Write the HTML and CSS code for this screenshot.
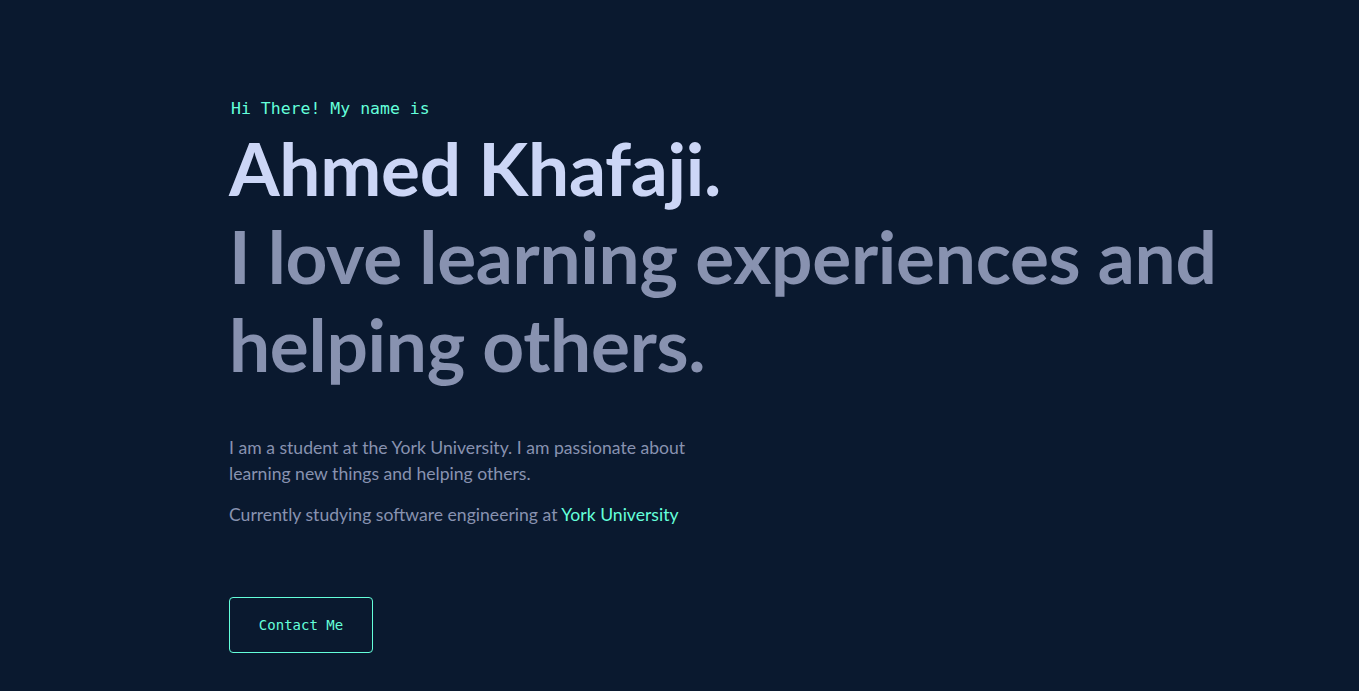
FILE: index.html
```html
<!DOCTYPE html>
<html lang="en">
<head>
<meta charset="utf-8">
<title>Ahmed Khafaji</title>
<link rel="stylesheet" href="styles.css">
</head>
<body>
<main class="main">
  <section class="hero">
    <p class="hello">Hi There! My name is</p>
    <h1 class="name">Ahmed Khafaji.</h1>
    <h2 class="tagline">I love learning experiences and helping others.</h2>
    <div class="about">
      <p>I am a student at the York University. I am passionate about learning new things and helping others.</p>
      <p>Currently studying software engineering at <a class="link" href="#">York University</a></p>
    </div>
    <a class="button" href="#">Contact Me</a>
  </section>
</main>
</body>
</html>
```
FILE: styles.css
```css
html, body {
  margin: 0;
  padding: 0;
  background: #0a192f;
}
body {
  font-family: "Lato", "Liberation Sans", sans-serif;
  color: #8892b0;
  min-height: 691px;
}
.main {
  padding: 99px 100px 0 229px;
}
.hero {
  display: flex;
  flex-direction: column;
  align-items: flex-start;
}
.hello {
  margin: 0 0 5px 2px;
  font-family: "DejaVu Sans Mono", "Liberation Mono", monospace;
  font-size: 16.5px;
  line-height: 20px;
  color: #64ffda;
}
.name, .tagline {
  margin: 0;
  font-size: 73px;
  line-height: 88px;
  font-weight: 700;
  letter-spacing: -0.3px;
}
.name {
  color: #ccd6f6;
}
.tagline {
  color: #8892b0;
}
.about {
  margin-top: 47px;
  max-width: 470px;
}
.about p {
  margin: 0 0 15px;
  font-size: 17.6px;
  line-height: 26px;
}
.link {
  color: #64ffda;
  text-decoration: none;
}
.button {
  margin-top: 54px;
  display: flex;
  align-items: center;
  justify-content: center;
  width: 142px;
  height: 54px;
  border: 1px solid #64ffda;
  border-radius: 4px;
  color: #64ffda;
  font-family: "DejaVu Sans Mono", "Liberation Mono", monospace;
  font-size: 14px;
  text-decoration: none;
}
```
